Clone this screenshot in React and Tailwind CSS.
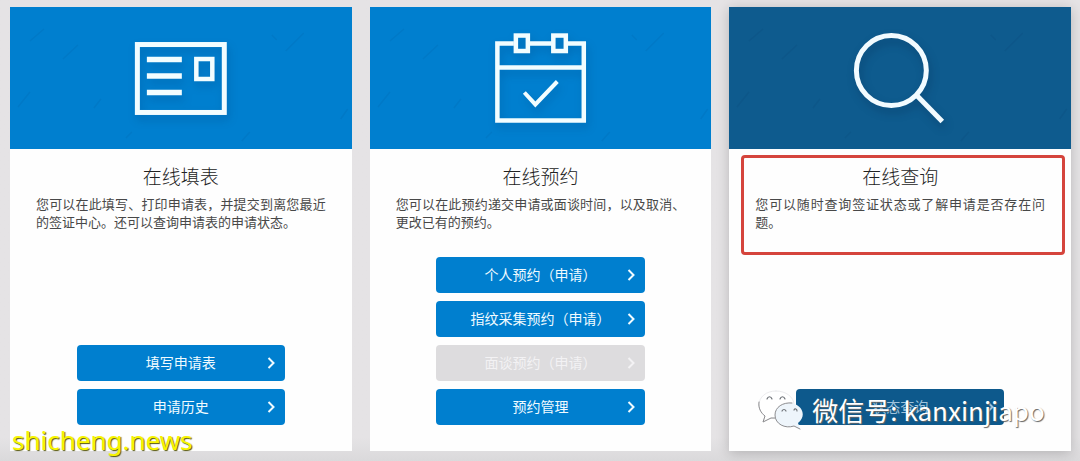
import React from "react";

function FormIcon() {
  return (
    <svg className="size-full" viewBox="0 0 342 142" fill="none" stroke="#f2fdff" aria-hidden="true">
      <Texture />
      <g className="drop-shadow-[2px_5px_4px_rgba(0,40,90,0.2)]">
        <rect x="127.5" y="37.5" width="87" height="68" strokeWidth="5" />
        <path d="M137 52.500h35M137 69h35M137 85.500h35" strokeWidth="5.500" />
        <rect x="186.500" y="52" width="16" height="20" strokeWidth="4.500" />
      </g>
    </svg>
  );
}

function CalendarIcon() {
  return (
    <svg className="size-full" viewBox="0 0 342 142" fill="none" stroke="#f2fdff" aria-hidden="true">
      <Texture />
      <g className="drop-shadow-[2px_5px_4px_rgba(0,40,90,0.2)]" strokeWidth="4.500">
        <path d="M144 36.500h-16.500v77h86.500v-77H198M160 36.500h22M127.500 60.500h86.500" />
        <rect x="146" y="28.500" width="12" height="15.500" />
        <rect x="183.500" y="28.500" width="12.500" height="15.500" />
        <path d="M154.500 85.500 165.500 97.500 187.500 74.500" strokeWidth="4" />
      </g>
    </svg>
  );
}

function SearchIcon() {
  return (
    <svg className="size-full" viewBox="0 0 342 142" fill="none" stroke="#f2fbff" aria-hidden="true">
      <Texture />
      <g className="drop-shadow-[2px_5px_4px_rgba(0,20,50,0.25)]">
        <circle cx="162.500" cy="63.500" r="35" strokeWidth="5" />
        <path d="M188 88.500 213.500 114.500" strokeWidth="5" />
      </g>
    </svg>
  );
}

function Texture() {
  return (
    <path
      className="opacity-5"
      stroke="#001b3a"
      strokeWidth="1.500"
      d="M53 52l15-14M8 100l12-15M276 44l18-18M84 101l7-9M232 134l8-9M20 34l14-12M116 131l6-6M331 112l7-10M262 28l5 5"
    />
  );
}

function Chevron() {
  return (
    <svg className="absolute right-[10px] top-1/2 h-3 w-2 -translate-y-1/2" viewBox="0 0 8 12" fill="none" stroke="currentColor" strokeWidth="2" aria-hidden="true">
      <path d="M1.500 1 6.500 6 1.500 11" />
    </svg>
  );
}

function ActionButton({ children, disabled, dark }) {
  const tone = disabled ? "bg-[#dddcde] text-[#f3f2f4]" : dark ? "bg-[#0d598c] text-[#9fc3dc]" : "bg-[#007fcf] text-[#f0fbff]";
  return (
    <button type="button" disabled={disabled} className={`relative h-9 w-full rounded pb-[2px] text-center text-sm ${tone}`}>
      {children}
      <Chevron />
    </button>
  );
}

function Card({ title, text, icon, dark, children, overlay }) {
  return (
    <section className={`relative flex flex-1 flex-col bg-[#fefefe] ${dark ? "shadow-[0_2px_12px_rgba(0,0,0,0.2)]" : ""}`}>
      <div className={`h-[142px] ${dark ? "bg-[#0e5b8e]" : "bg-[#007fcf]"}`}>{icon}</div>
      <div className="px-[26px] pt-[11px]">
        <h2 className="text-center text-[19px] leading-8 font-light text-[#222]">{title}</h2>
        <p className="mt-[3px] text-justify text-[13px] leading-[18px] text-[#484848]">{text}</p>
      </div>
      <div className="mx-auto mt-auto mb-[26px] flex w-[61%] flex-col gap-2">{children}</div>
      {overlay}
    </section>
  );
}

function WeChatMark() {
  return (
    <svg className="h-10 w-12 shrink-0" viewBox="0 0 48 40" fill="none" strokeLinecap="round" aria-hidden="true">
      <path fill="#fff" stroke="#ececee" strokeWidth="1" d="M20 1C10 1 3 7 3 15c0 5 3 9 6 11l-2 6 8-4c12 3 23-4 23-13C38 7 30 1 20 1Z" />
      <path stroke="#8d8d90" strokeWidth="1" d="M3 12c-1 6 2 11 6 14l-2 6 8-4h4" />
      <path fill="#eef5fb" d="M33 13c-8 0-14 5-14 12 0 9 10 14 19 11l6 3-2-6c10-8 3-20-9-20Z" />
      <path stroke="#8d8d90" strokeWidth="1" d="M36 13c-9-1-17 4-17 12 0 9 10 14 19 11l6 3" />
      <path stroke="#6f7378" strokeWidth="1.200" d="M11 9c1-3 4-3 5 0M24 9c1-3 4-3 5 0M26 21c1-2 3-2 4 0M38 20c1-2 3-1 3 1" />
    </svg>
  );
}

export default function App() {
  return (
    <main className="relative bg-linear-to-b from-[#e5e3e5] from-95% to-[#dad9db] pt-[7px] pr-[9px] pb-[10px] pl-[10px] font-['Noto_Sans_CJK_SC','Noto_Sans',sans-serif]">
      <div className="flex min-h-[444px] gap-[18px]">
        <Card title="在线填表" text="您可以在此填写、打印申请表，并提交到离您最近的签证中心。还可以查询申请表的申请状态。" icon={<FormIcon />}>
          <ActionButton>填写申请表</ActionButton>
          <ActionButton>申请历史</ActionButton>
        </Card>
        <Card title="在线预约" text="您可以在此预约递交申请或面谈时间，以及取消、更改已有的预约。" icon={<CalendarIcon />}>
          <ActionButton>个人预约（申请）</ActionButton>
          <ActionButton>指纹采集预约（申请）</ActionButton>
          <ActionButton disabled>面谈预约（申请）</ActionButton>
          <ActionButton>预约管理</ActionButton>
        </Card>
        <Card
          dark
          title="在线查询"
          text="您可以随时查询签证状态或了解申请是否存在问题。"
          icon={<SearchIcon />}
          overlay={
            <>
              <div className="pointer-events-none absolute top-[148px] right-[6px] left-3 h-[100px] rounded border-[3px] border-[#d5443c]" />
              <div className="pointer-events-none absolute bottom-[21px] left-[27px] flex items-center gap-2 whitespace-nowrap text-white">
                <WeChatMark />
                <span className="text-[26px] leading-10 [text-shadow:1px_1px_1px_#666]">微信号: kanxinjiapo</span>
              </div>
            </>
          }
        >
          <ActionButton dark>状态查询</ActionButton>
        </Card>
      </div>
      <div className="pointer-events-none absolute bottom-[5px] left-3 font-['Noto_Sans',sans-serif] text-[26px] leading-8 text-[#f8f500] [text-shadow:1px_1px_1px_#55550a]">shicheng.news</div>
    </main>
  );
}
